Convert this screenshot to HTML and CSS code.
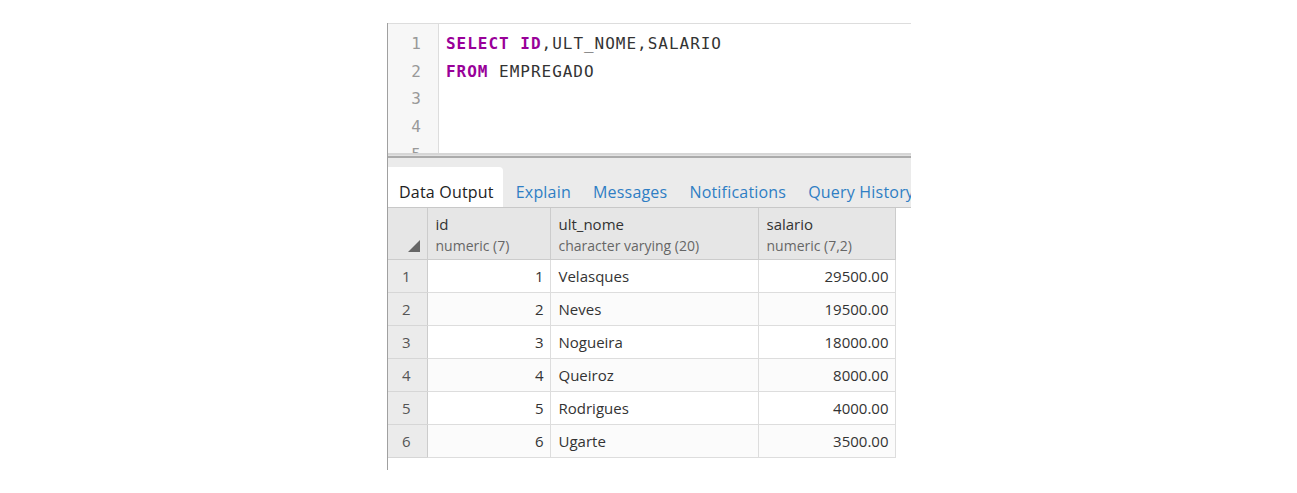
FILE: index.html
```html
<!DOCTYPE html>
<html>
<head>
<meta charset="utf-8">
<link rel="stylesheet" href="styles.css">
</head>
<body>
<div class="panel">
  <div class="editor">
    <div class="gutter">
      <div class="ln">1</div>
      <div class="ln">2</div>
      <div class="ln">3</div>
      <div class="ln">4</div>
      <div class="ln">5</div>
    </div>
    <div class="code">
      <div class="line"><span class="kw">SELECT</span> <span class="kw">ID</span>,ULT_NOME,SALARIO</div>
      <div class="line"><span class="kw">FROM</span> EMPREGADO</div>
      <div class="line">&nbsp;</div>
      <div class="line">&nbsp;</div>
      <div class="line">&nbsp;</div>
    </div>
  </div>
  <div class="splitter"></div>
  <div class="tabs">
    <div class="tab active">Data Output</div>
    <div class="tab">Explain</div>
    <div class="tab">Messages</div>
    <div class="tab">Notifications</div>
    <div class="tab">Query History</div>
  </div>
  <table class="grid">
    <colgroup>
      <col class="c-row">
      <col class="c-id">
      <col class="c-nome">
      <col class="c-sal">
    </colgroup>
    <thead>
      <tr>
        <th class="corner"><span class="tri"></span></th>
        <th><div class="hname">id</div><div class="htype">numeric (7)</div></th>
        <th><div class="hname">ult_nome</div><div class="htype">character varying (20)</div></th>
        <th><div class="hname">salario</div><div class="htype">numeric (7,2)</div></th>
      </tr>
    </thead>
    <tbody>
      <tr><td class="rn">1</td><td class="num">1</td><td>Velasques</td><td class="num">29500.00</td></tr>
      <tr><td class="rn">2</td><td class="num">2</td><td>Neves</td><td class="num">19500.00</td></tr>
      <tr><td class="rn">3</td><td class="num">3</td><td>Nogueira</td><td class="num">18000.00</td></tr>
      <tr><td class="rn">4</td><td class="num">4</td><td>Queiroz</td><td class="num">8000.00</td></tr>
      <tr><td class="rn">5</td><td class="num">5</td><td>Rodrigues</td><td class="num">4000.00</td></tr>
      <tr><td class="rn">6</td><td class="num">6</td><td>Ugarte</td><td class="num">3500.00</td></tr>
    </tbody>
  </table>
</div>
</body>
</html>
```

FILE: styles.css
```css
html, body {
  margin: 0;
  padding: 0;
  background: #ffffff;
}

body {
  padding: 23px 0 0 387px;
  font-family: "Open Sans", "DejaVu Sans", sans-serif;
}

.panel {
  width: 523px;
  height: 447px;
  border-left: 1px solid #a0a0a0;
  overflow: hidden;
  display: flex;
  flex-direction: column;
}

.editor {
  display: flex;
  height: 130px;
  flex: 0 0 130px;
  border-top: 1px solid #dddddd;
  box-sizing: border-box;
  overflow: hidden;
  background: #ffffff;
}

.gutter {
  width: 51px;
  flex: 0 0 51px;
  background: #f7f7f7;
  border-right: 1px solid #dddddd;
  padding-top: 6px;
  box-sizing: border-box;
}

.ln {
  height: 27.7px;
  line-height: 27.7px;
  text-align: right;
  padding-right: 17px;
  font-family: "DejaVu Sans Mono", monospace;
  font-size: 16px;
  color: #999999;
}

.code {
  padding-top: 6px;
  padding-left: 7px;
}

.line {
  height: 27.7px;
  line-height: 27.7px;
  font-family: "DejaVu Sans Mono", monospace;
  font-size: 16px;
  letter-spacing: 0.98px;
  color: #333333;
  white-space: pre;
}

.kw {
  color: #990099;
  font-weight: bold;
}

.splitter {
  flex: 0 0 5px;
  height: 5px;
  border-top: 2px solid #d6d6d6;
  border-bottom: 2px solid #ababab;
  background: #e2e2e2;
  box-sizing: border-box;
}

.tabs {
  flex: 0 0 50px;
  height: 50px;
  box-sizing: border-box;
  background: #ebebeb;
  border-bottom: 1px solid #c8c8c8;
  display: flex;
  align-items: flex-end;
  white-space: nowrap;
}

.tab {
  height: 40px;
  line-height: 50px;
  padding: 0 11px;
  font-size: 16px;
  letter-spacing: 0.2px;
  color: #2f7ec4;
  flex: 0 0 auto;
}

.tab.active {
  background: #ffffff;
  color: #222222;
  border-radius: 0 4px 0 0;
  padding: 0 9px 0 11px;
  margin-right: 2px;
}

.grid {
  border-collapse: collapse;
  table-layout: fixed;
  width: 507px;
  font-size: 15px;
  color: #333333;
}

.c-row { width: 39px; }
.c-id { width: 123px; }
.c-nome { width: 208px; }
.c-sal { width: 137px; }

.grid th {
  height: 51px;
  background: #e6e6e6;
  border-right: 1px solid #cccccc;
  border-bottom: 1px solid #cccccc;
  text-align: left;
  vertical-align: top;
  padding: 5px 8px 0 8px;
  font-weight: normal;
  box-sizing: border-box;
}

.grid th.corner {
  position: relative;
  padding: 0;
}

.tri {
  position: absolute;
  right: 7px;
  bottom: 7px;
  width: 0;
  height: 0;
  border-left: 12px solid transparent;
  border-bottom: 12px solid #666666;
}

.hname {
  font-size: 15px;
  line-height: 22px;
  color: #333333;
}

.htype {
  font-size: 14px;
  line-height: 21px;
  color: #666666;
}

.grid td {
  height: 33px;
  box-sizing: border-box;
  border-right: 1px solid #dddddd;
  border-bottom: 1px solid #dddddd;
  padding: 0 7px 0 8px;
  line-height: 32px;
  white-space: nowrap;
  background: #ffffff;
}

.grid tbody tr:nth-child(even) td {
  background: #fbfbfb;
}

.grid td.rn,
.grid tbody tr:nth-child(even) td.rn {
  background: #ebebeb;
  border-right: 1px solid #cccccc;
  border-bottom: 1px solid #d6d6d6;
  text-align: center;
  padding: 0 2px 0 0;
  color: #555555;
}

.grid td.num {
  text-align: right;
  padding-right: 6px;
}
```
